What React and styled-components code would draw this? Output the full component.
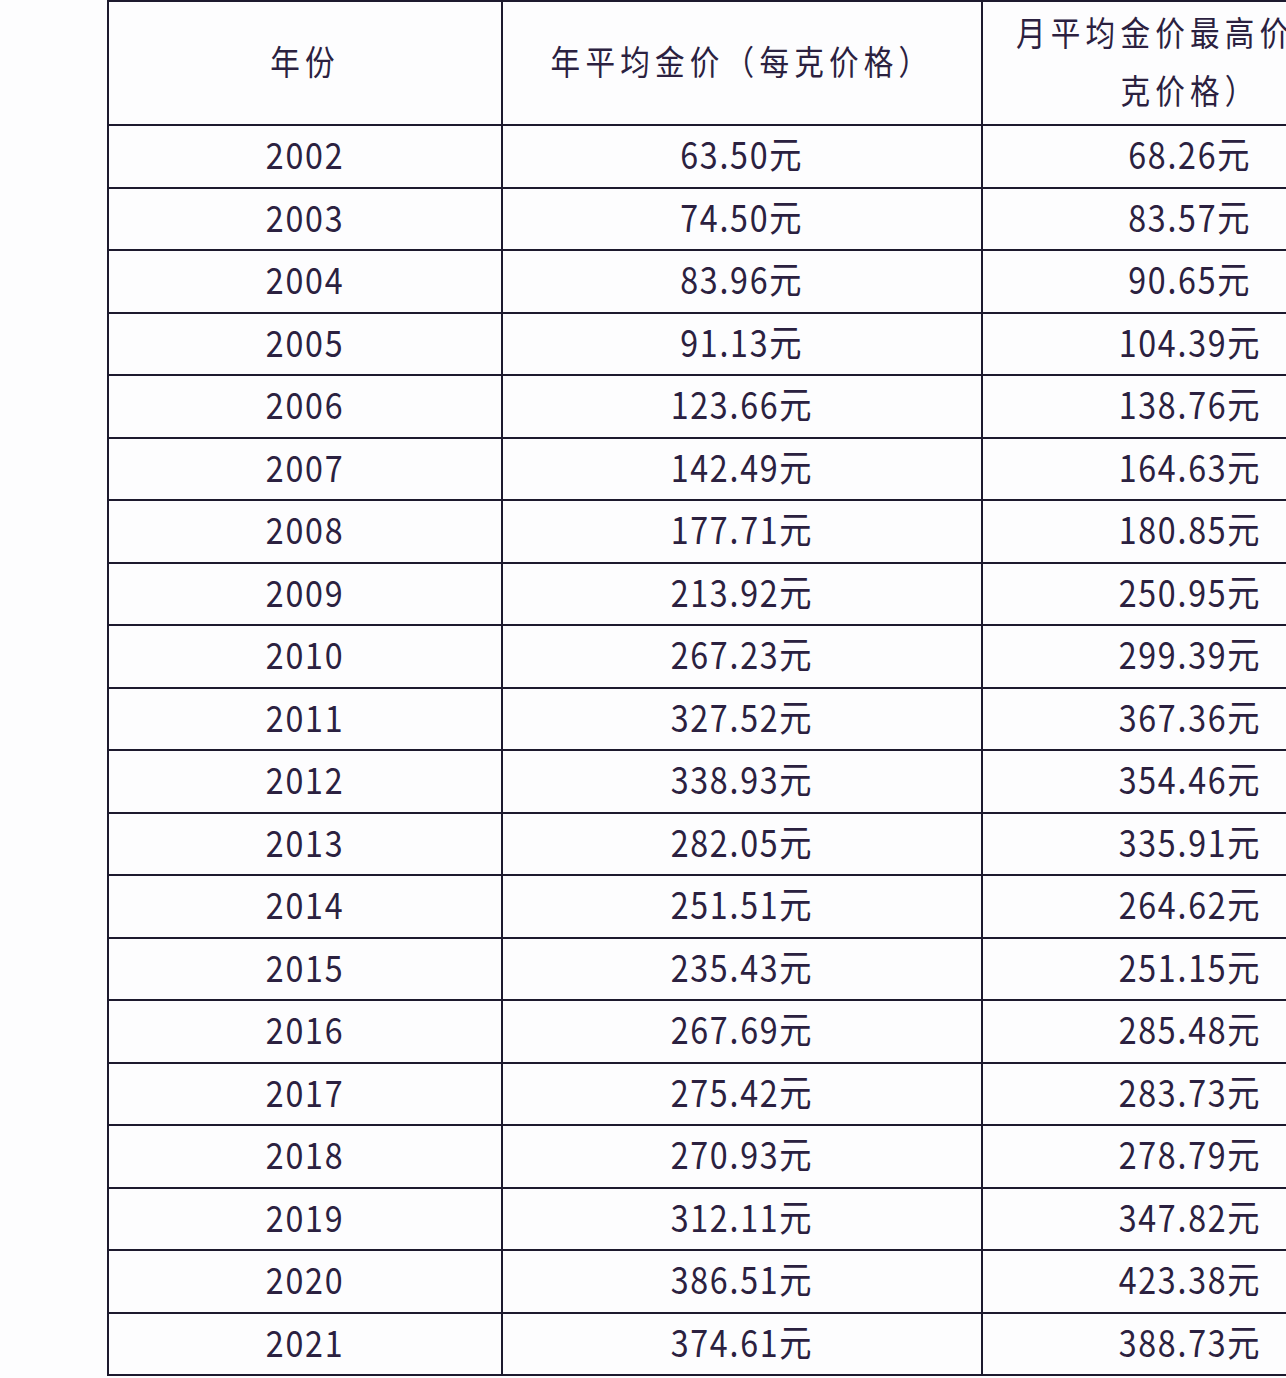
import React from "react";
import styled, { createGlobalStyle } from "styled-components";

const rows = [
  ["2002", "63.50元", "68.26元"],
  ["2003", "74.50元", "83.57元"],
  ["2004", "83.96元", "90.65元"],
  ["2005", "91.13元", "104.39元"],
  ["2006", "123.66元", "138.76元"],
  ["2007", "142.49元", "164.63元"],
  ["2008", "177.71元", "180.85元"],
  ["2009", "213.92元", "250.95元"],
  ["2010", "267.23元", "299.39元"],
  ["2011", "327.52元", "367.36元"],
  ["2012", "338.93元", "354.46元"],
  ["2013", "282.05元", "335.91元"],
  ["2014", "251.51元", "264.62元"],
  ["2015", "235.43元", "251.15元"],
  ["2016", "267.69元", "285.48元"],
  ["2017", "275.42元", "283.73元"],
  ["2018", "270.93元", "278.79元"],
  ["2019", "312.11元", "347.82元"],
  ["2020", "386.51元", "423.38元"],
  ["2021", "374.61元", "388.73元"],
];

const GlobalStyle = createGlobalStyle`
  html, body {
    margin: 0;
    padding: 0;
    background: #fdfdfe;
    overflow: hidden;
  }
  body {
    font-family: "Noto Sans CJK SC", "Noto Sans", sans-serif;
    color: #2b2140;
  }
`;

const Page = styled.div`
  width: 1286px;
  height: 1378px;
  overflow: hidden;
  padding-left: 107px;
  box-sizing: border-box;
`;

const Table = styled.table`
  border-collapse: collapse;
  table-layout: fixed;
  width: 1290px;
`;

const Col = styled.col`
  width: ${(p) => p.$w}px;
`;

const HeadRow = styled.tr`
  height: 124px;
`;

const Row = styled.tr`
  height: 62.5px;
`;

const HeadCell = styled.th`
  border: 2px solid #1d1a2e;
  font-weight: 400;
  padding: 0 0 4px;
  text-align: center;
  vertical-align: middle;
  font-size: 34px;
  line-height: 58px;
`;

const Cell = styled.td`
  border: 2px solid #1d1a2e;
  padding: 0 0 6px;
  text-align: center;
  vertical-align: middle;
  font-size: 37px;
  line-height: 44px;
`;

const Squeeze = styled.span`
  display: inline-block;
  white-space: nowrap;
  letter-spacing: ${(p) => p.$ls || 0}px;
  transform: scaleX(0.87);
  transform-origin: center;
`;

export default function App() {
  return (
    <Page>
      <GlobalStyle />
      <Table>
        <colgroup>
          <Col $w={394} />
          <Col $w={480} />
          <Col $w={416} />
        </colgroup>
        <thead>
          <HeadRow>
            <HeadCell>
              <Squeeze $ls={6}>年份</Squeeze>
            </HeadCell>
            <HeadCell>
              <Squeeze $ls={6}>年平均金价（每克价格）</Squeeze>
            </HeadCell>
            <HeadCell>
              <Squeeze $ls={6}>
                月平均金价最高价（每
                <br />
                克价格）
              </Squeeze>
            </HeadCell>
          </HeadRow>
        </thead>
        <tbody>
          {rows.map((r) => (
            <Row key={r[0]}>
              {r.map((v, i) => (
                <Cell key={i}>
                  <Squeeze $ls={2}>{v}</Squeeze>
                </Cell>
              ))}
            </Row>
          ))}
        </tbody>
      </Table>
    </Page>
  );
}
